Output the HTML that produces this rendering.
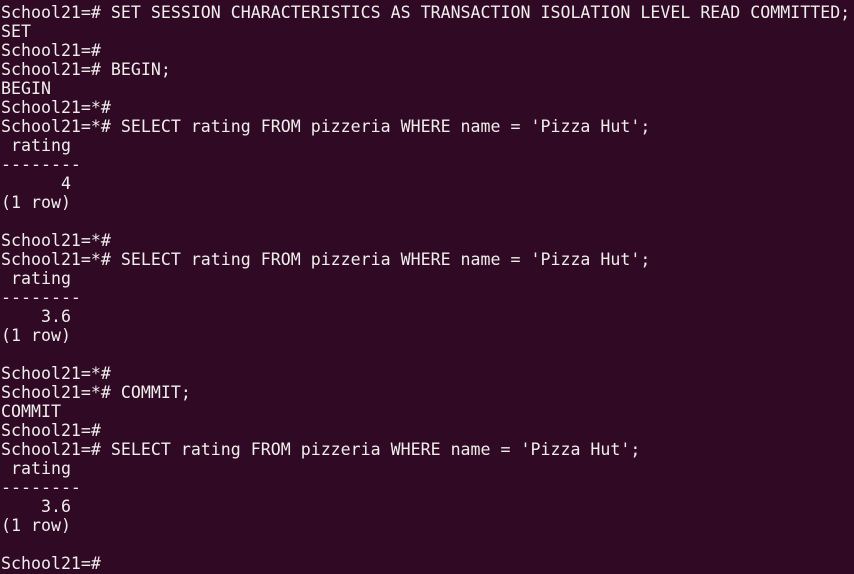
<!DOCTYPE html>
<html><head><meta charset="utf-8"><style>
html,body{margin:0;padding:0;background:#300a24;width:854px;height:574px;overflow:hidden}
pre{margin:0;padding:3px 0 0 1px;font-family:"DejaVu Sans Mono","Liberation Mono",monospace;font-size:16.6px;line-height:19px;color:#eeeeec;white-space:pre}
</style></head><body><pre>School21=# SET SESSION CHARACTERISTICS AS TRANSACTION ISOLATION LEVEL READ COMMITTED;
SET
School21=#
School21=# BEGIN;
BEGIN
School21=*#
School21=*# SELECT rating FROM pizzeria WHERE name = 'Pizza Hut';
 rating
--------
      4
(1 row)

School21=*#
School21=*# SELECT rating FROM pizzeria WHERE name = 'Pizza Hut';
 rating
--------
    3.6
(1 row)

School21=*#
School21=*# COMMIT;
COMMIT
School21=#
School21=# SELECT rating FROM pizzeria WHERE name = 'Pizza Hut';
 rating
--------
    3.6
(1 row)

School21=#</pre></body></html>
